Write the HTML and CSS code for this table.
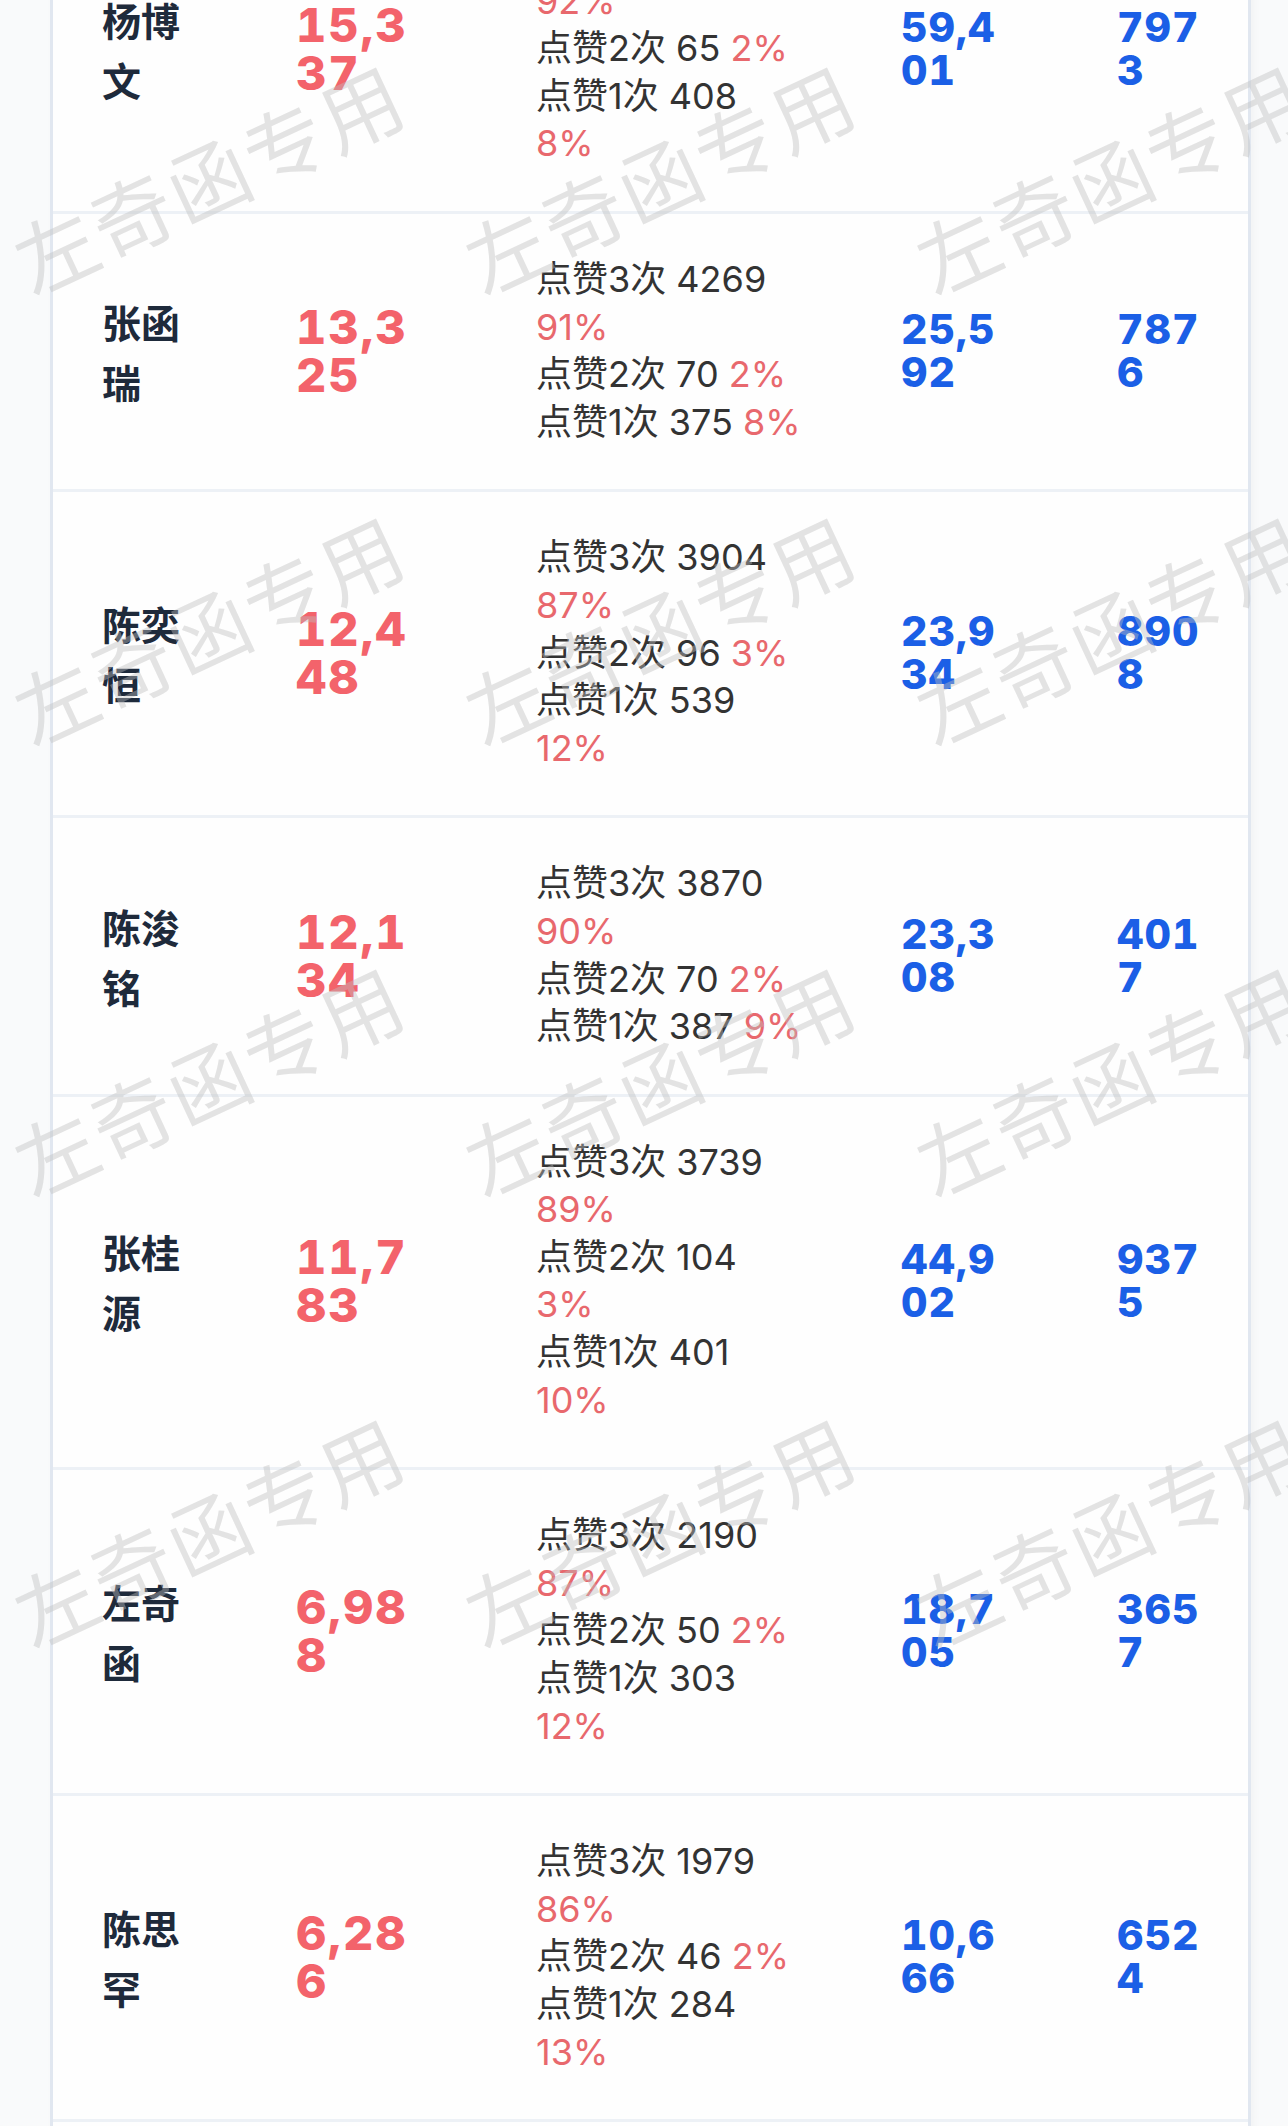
FILE: index.html
```html
<!DOCTYPE html>
<html lang="zh-CN">
<head>
    <meta charset="UTF-8">
    <meta name="viewport" content="width=device-width, initial-scale=1.0">
    <title>点赞统计</title>
    <link rel="stylesheet" href="styles.css">
</head>
<body>
    <div class="page">
        <!-- 列表（已向下滚动） -->
        <div class="rank-table">
            <div class="row">
                <div class="name">杨博<br>文</div>
                <div class="num red">15,3<br>37</div>
                <div class="likes">
                    <p>点赞3次 4912</p>
                    <p class="pct">92%</p>
                    <p>点赞2次 65 <span class="pct">2%</span></p>
                    <p>点赞1次 408</p>
                    <p class="pct">8%</p>
                </div>
                <div class="num blue">59,4<br>01</div>
                <div class="num blue">797<br>3</div>
            </div>

            <div class="row">
                <div class="name">张函<br>瑞</div>
                <div class="num red">13,3<br>25</div>
                <div class="likes">
                    <p>点赞3次 4269</p>
                    <p class="pct">91%</p>
                    <p>点赞2次 70 <span class="pct">2%</span></p>
                    <p>点赞1次 375 <span class="pct">8%</span></p>
                </div>
                <div class="num blue">25,5<br>92</div>
                <div class="num blue">787<br>6</div>
            </div>

            <div class="row">
                <div class="name">陈奕<br>恒</div>
                <div class="num red">12,4<br>48</div>
                <div class="likes">
                    <p>点赞3次 3904</p>
                    <p class="pct">87%</p>
                    <p>点赞2次 96 <span class="pct">3%</span></p>
                    <p>点赞1次 539</p>
                    <p class="pct">12%</p>
                </div>
                <div class="num blue">23,9<br>34</div>
                <div class="num blue">890<br>8</div>
            </div>

            <div class="row">
                <div class="name">陈浚<br>铭</div>
                <div class="num red">12,1<br>34</div>
                <div class="likes">
                    <p>点赞3次 3870</p>
                    <p class="pct">90%</p>
                    <p>点赞2次 70 <span class="pct">2%</span></p>
                    <p>点赞1次 387 <span class="pct">9%</span></p>
                </div>
                <div class="num blue">23,3<br>08</div>
                <div class="num blue">401<br>7</div>
            </div>

            <div class="row">
                <div class="name">张桂<br>源</div>
                <div class="num red">11,7<br>83</div>
                <div class="likes">
                    <p>点赞3次 3739</p>
                    <p class="pct">89%</p>
                    <p>点赞2次 104</p>
                    <p class="pct">3%</p>
                    <p>点赞1次 401</p>
                    <p class="pct">10%</p>
                </div>
                <div class="num blue">44,9<br>02</div>
                <div class="num blue">937<br>5</div>
            </div>

            <div class="row">
                <div class="name">左奇<br>函</div>
                <div class="num red">6,98<br>8</div>
                <div class="likes">
                    <p>点赞3次 2190</p>
                    <p class="pct">87%</p>
                    <p>点赞2次 50 <span class="pct">2%</span></p>
                    <p>点赞1次 303</p>
                    <p class="pct">12%</p>
                </div>
                <div class="num blue">18,7<br>05</div>
                <div class="num blue">365<br>7</div>
            </div>

            <div class="row">
                <div class="name">陈思<br>罕</div>
                <div class="num red">6,28<br>6</div>
                <div class="likes">
                    <p>点赞3次 1979</p>
                    <p class="pct">86%</p>
                    <p>点赞2次 46 <span class="pct">2%</span></p>
                    <p>点赞1次 284</p>
                    <p class="pct">13%</p>
                </div>
                <div class="num blue">10,6<br>66</div>
                <div class="num blue">652<br>4</div>
            </div>
        </div>

        <!-- 水印 -->
        <div class="watermark">
            <div class="mark"><span>左奇函专用</span></div>
            <div class="mark"><span>左奇函专用</span></div>
            <div class="mark"><span>左奇函专用</span></div>
            <div class="mark"><span>左奇函专用</span></div>
            <div class="mark"><span>左奇函专用</span></div>
            <div class="mark"><span>左奇函专用</span></div>
            <div class="mark"><span>左奇函专用</span></div>
            <div class="mark"><span>左奇函专用</span></div>
            <div class="mark"><span>左奇函专用</span></div>
            <div class="mark"><span>左奇函专用</span></div>
            <div class="mark"><span>左奇函专用</span></div>
            <div class="mark"><span>左奇函专用</span></div>
            <div class="mark"><span>左奇函专用</span></div>
            <div class="mark"><span>左奇函专用</span></div>
            <div class="mark"><span>左奇函专用</span></div>
        </div>
    </div>
</body>
</html>
```

FILE: styles.css
```css
* {
    margin: 0;
    padding: 0;
    box-sizing: border-box;
}
body {
    background-color: #f9fafb;
    font-family: "Inter", "Noto Sans CJK SC", sans-serif;
}
.page {
    position: relative;
    height: 2126px;
    overflow: hidden;
}
.rank-table {
    width: 1201px;
    margin-left: 50px;
    margin-top: -112px; /* 页面已滚动 */
    padding-bottom: 60px;
    background-color: #fefefe;
    border-left: 3px solid #e1e7f0;
    border-right: 3px solid #e1e7f0;
    box-shadow: 3px 0 8px rgba(0, 0, 0, 0.03);
}
.row {
    display: grid;
    grid-template-columns: 194px 240px 365px 216px 1fr;
    align-items: center;
    padding: 42px 0 43px 49px;
    border-bottom: 3px solid #edf1f6;
}
.name {
    font-family: "Noto Sans CJK SC", sans-serif;
    font-size: 39px;
    font-weight: 700;
    line-height: 60px;
    color: #1e2a3b;
}
.num {
    font-weight: 800;
    font-variant-numeric: tabular-nums;
}
.red {
    font-size: 47px;
    line-height: 48px;
    letter-spacing: 2px;
    color: #f3636b;
}
.blue {
    font-size: 41px;
    line-height: 43px;
    letter-spacing: 1px;
    color: #1b5fe6;
}
.likes {
    font-size: 36px;
    line-height: 47.6px;
    color: #333333;
    white-space: nowrap;
}
.pct {
    color: #e8686d;
}

/* 水印层 */
.watermark {
    position: absolute;
    left: -17px;
    top: -50px;
    width: 1804px;
    display: flex;
    flex-wrap: wrap;
    pointer-events: none;
}
.mark {
    width: 451px;
    height: 451px;
    display: flex;
    align-items: center;
    justify-content: center;
}
.mark span {
    font-family: "Noto Sans CJK SC", sans-serif;
    font-size: 81px;
    font-weight: 400;
    letter-spacing: 3px;
    white-space: nowrap;
    color: rgba(190, 190, 190, 0.42);
    transform: rotate(-25deg);
}
```
